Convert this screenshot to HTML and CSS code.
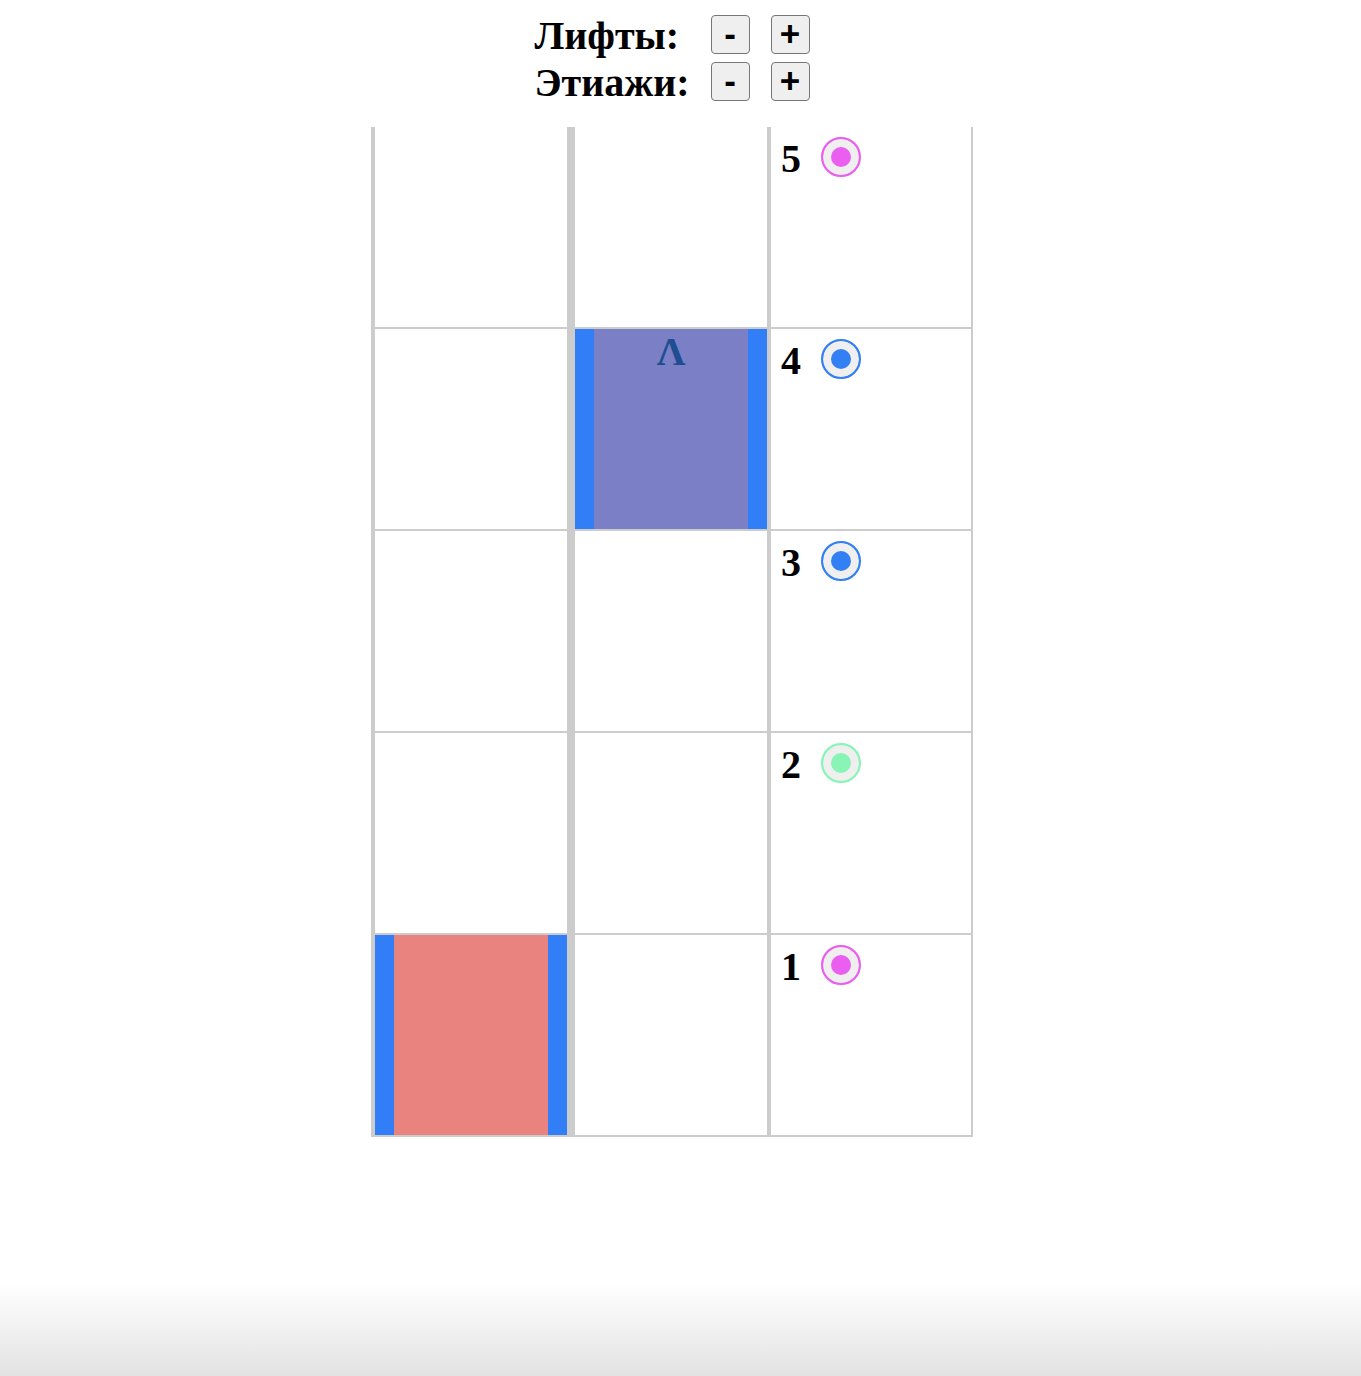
FILE: index.html
```html
<!DOCTYPE html>
<html lang="ru">
<head>
<meta charset="utf-8">
<title>Лифты</title>
<link rel="stylesheet" href="styles.css">
</head>
<body>
<header class="controls">
  <div class="label">Лифты:</div>
  <button class="btn" type="button">-</button>
  <button class="btn" type="button">+</button>
  <div class="label">Этиажи:</div>
  <button class="btn" type="button">-</button>
  <button class="btn" type="button">+</button>
</header>
<main class="building">
  <div class="shaft">
    <div class="cell"></div>
    <div class="cell"></div>
    <div class="cell"></div>
    <div class="cell"></div>
    <div class="cell"><div class="lift lift-red"></div></div>
  </div>
  <div class="shaft">
    <div class="cell"></div>
    <div class="cell"><div class="lift lift-purple"><span class="arrow">Λ</span></div></div>
    <div class="cell"></div>
    <div class="cell"></div>
    <div class="cell"></div>
  </div>
  <div class="floors">
    <div class="floor"><span class="num">5</span><span class="radio radio-pink"></span></div>
    <div class="floor"><span class="num">4</span><span class="radio radio-blue"></span></div>
    <div class="floor"><span class="num">3</span><span class="radio radio-blue"></span></div>
    <div class="floor"><span class="num">2</span><span class="radio radio-green"></span></div>
    <div class="floor"><span class="num">1</span><span class="radio radio-pink"></span></div>
  </div>
</main>
</body>
</html>
```

FILE: styles.css
```css
html {
  min-height: 100%;
  background: linear-gradient(to bottom, #ffffff 0, #ffffff calc(100% - 92px), #e2e2e2 100%);
}
body {
  margin: 0;
  padding: 0 17px 0 0;
  font-family: "Liberation Serif", "Times New Roman", serif;
  color: #000;
}
.controls {
  display: grid;
  grid-template-columns: auto 39px 39px;
  grid-auto-rows: 44px;
  column-gap: 21px;
  row-gap: 3px;
  justify-content: center;
  padding-top: 14px;
}
.label {
  font-size: 40px;
  font-weight: 700;
  line-height: 44px;
  white-space: nowrap;
}
.btn {
  box-sizing: border-box;
  width: 39px;
  height: 39px;
  margin-top: 1px;
  padding: 0 0 3px;
  border: 1px solid #767676;
  border-radius: 4px;
  background: #efefef;
  color: #000;
  font-family: "Liberation Sans", Arial, sans-serif;
  font-size: 35px;
  font-weight: 700;
  line-height: 1;
}
.building {
  display: flex;
  justify-content: center;
  margin-top: 22px;
}
.shaft {
  width: 192px;
  border-left: 4px solid #cccccc;
  border-right: 4px solid #cccccc;
}
.cell {
  height: 200px;
  border-bottom: 2px solid #cccccc;
}
.lift {
  box-sizing: border-box;
  height: 100%;
  border-left: 19px solid #317ef6;
  border-right: 19px solid #317ef6;
  text-align: center;
}
.lift-red {
  background: #e9837f;
}
.lift-purple {
  background: #7b80c6;
}
.arrow {
  display: block;
  font-size: 40px;
  font-weight: 700;
  line-height: 46px;
  color: #1e4e91;
}
.floors {
  width: 200px;
  border-right: 2px solid #cccccc;
}
.floor {
  box-sizing: border-box;
  height: 202px;
  border-bottom: 2px solid #cccccc;
  display: flex;
  align-items: flex-start;
  gap: 20px;
  padding: 10px 0 0 10px;
}
.num {
  font-size: 40px;
  font-weight: 700;
  line-height: 44px;
}
.radio {
  width: 36px;
  height: 36px;
  border: 2px solid;
  border-radius: 50%;
  box-shadow: inset 0 0 0 8px #efefef;
}
.radio-pink {
  border-color: #ea5ef0;
  background: #ea5ef0;
}
.radio-blue {
  border-color: #3380f5;
  background: #3380f5;
}
.radio-green {
  border-color: #88f5b6;
  background: #88f5b6;
}
```
